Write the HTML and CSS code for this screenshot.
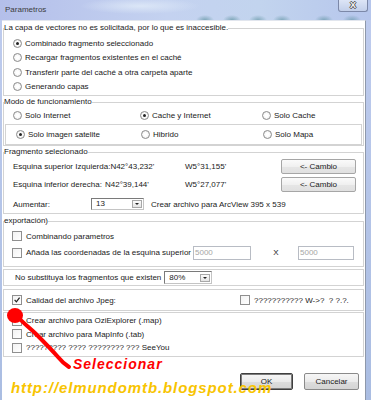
FILE: index.html
```html
<!DOCTYPE html>
<html lang="es">
<head>
  <meta charset="UTF-8" />
  <title>Parametros</title>
  <link rel="stylesheet" href="styles.css">
</head>
<body>
  <div class="window">
    <div class="titlebar">
      <span class="title">Parametros</span>
      <span class="close">X</span>
    </div>

    <div class="client">
      <fieldset class="group g1">
        <legend>La capa de vectores no es solicitada, por lo que es inaccesible.</legend>
        <div class="row"><span class="radio on"></span>Combinado fragmento seleccionado</div>
        <div class="row"><span class="radio"></span>Recargar fragmentos existentes en el caché</div>
        <div class="row"><span class="radio"></span>Transferir parte del caché a otra carpeta aparte</div>
        <div class="row"><span class="radio"></span>Generando capas</div>
      </fieldset>

      <fieldset class="group g2">
        <legend>Modo de funcionamiento</legend>
        <div class="row cols">
          <span class="opt"><span class="radio"></span>Solo Internet</span>
          <span class="opt"><span class="radio on"></span>Cache y Internet</span>
          <span class="opt"><span class="radio"></span>Solo Cache</span>
        </div>
        <div class="subbox cols">
          <span class="opt"><span class="radio on"></span>Solo imagen satelite</span>
          <span class="opt"><span class="radio"></span>Hibrido</span>
          <span class="opt"><span class="radio"></span>Solo Mapa</span>
        </div>
      </fieldset>

      <fieldset class="group g3">
        <legend>Fragmento selecionado</legend>
        <div class="coord">
          <span class="lbl">Esquina superior Izquierda:N42°43,232'</span>
          <span>W5°31,155'</span>
          <button class="btn small">&lt;- Cambio</button>
        </div>
        <div class="coord">
          <span class="lbl">Esquina inferior derecha:<span class="val">N42°39,144'</span></span>
          <span>W5°27,077'</span>
          <button class="btn small">&lt;- Cambio</button>
        </div>
        <div class="zoomrow">
          <span class="zlbl">Aumentar:</span>
          <span class="combo zcombo">13<span class="drop"></span></span>
          <span class="ztext">Crear archivo para ArcView 395 x 539</span>
        </div>
      </fieldset>

      <fieldset class="group g4">
        <legend>exportación)</legend>
        <div class="row r1"><span class="check"></span>Combinando parametros</div>
        <div class="row r2">
          <span class="check"></span>
          <span class="clip">Añada las coordenadas de la esquina superior i</span>
          <span class="field">5000</span>
          <span class="times">X</span>
          <span class="field f2">5000</span>
        </div>
      </fieldset>

      <div class="box b5">
        <span>No substituya los fragmentos que existen</span>
        <span class="combo pcombo">80%<span class="drop"></span></span>
      </div>

      <div class="box b6">
        <span class="opt wide"><span class="check on"><svg viewBox="0 0 9 9"><path d="M1.8 4.4 L3.8 6.6 L7.4 1.8"/></svg></span>Calidad del archivo Jpeg:</span>
        <span class="opt"><span class="check"></span>??????????? W-&gt;?&nbsp; ? ?.?.</span>
      </div>

      <div class="box b7">
        <div class="row"><span class="check"></span>Crear archivo para OziExplorer (.map)</div>
        <div class="row"><span class="check"></span>Crear archivo para MapInfo (.tab)</div>
        <div class="row"><span class="check"></span>????????? ???? ???????? ??? SeeYou</div>
      </div>

      <div class="footer">
        <button class="btn def">OK</button>
        <button class="btn cancel">Cancelar</button>
      </div>
    </div>

    <svg class="marks" width="371" height="400" viewBox="0 0 371 400">
      <ellipse cx="15" cy="315.5" rx="8" ry="7.5" fill="#ff0000"/>
      <path d="M17 316 C 24 324, 30 328, 36 334 C 44 342, 50 348, 58 357 C 62 362, 66 365, 69 367" fill="none" stroke="#ff0000" stroke-width="4" stroke-linecap="round"/>
      <text x="73" y="368.5" class="sel">Seleccionar</text>
      <text x="11" y="392.5" class="url">http://elmundomtb.blogspot.com</text>
    </svg>
  </div>
</body>
</html>
```

FILE: styles.css
```css
* {
  box-sizing: border-box;
}
body {
  margin: 0;
  font-family: "Liberation Sans", Arial, sans-serif;
  font-size: 8px;
  color: #1a1a1a;
}
.window {
  position: relative;
  width: 371px;
  height: 400px;
  overflow: hidden;
  background: linear-gradient(180deg, #bfccee, #aabde2);
}
.titlebar {
  height: 20px;
  display: flex;
  justify-content: space-between;
  align-items: flex-start;
  padding-left: 5px;
  background:
    radial-gradient(ellipse 9px 5px at 205px 20px, rgba(70,130,140,0.55), transparent),
    radial-gradient(ellipse 9px 5px at 232px 20px, rgba(70,130,140,0.55), transparent),
    radial-gradient(ellipse 9px 5px at 258px 20px, rgba(70,130,140,0.5), transparent),
    radial-gradient(ellipse 9px 5px at 282px 20px, rgba(70,130,140,0.5), transparent),
    radial-gradient(ellipse 9px 5px at 324px 20px, rgba(70,130,140,0.5), transparent),
    radial-gradient(ellipse 9px 5px at 352px 20px, rgba(70,130,140,0.45), transparent),
    radial-gradient(ellipse 60px 8px at 140px 6px, rgba(230,240,250,0.7), transparent),
    linear-gradient(90deg, #b4bfea, #c4d2f0 45%, #c2d4ee 70%, #b6c6ec);
}
.title {
  line-height: 20px;
  color: #3c3c3c;
}
.close {
  width: 30px;
  height: 12px;
  margin-right: 3px;
  border: 1px solid #7c88a8;
  border-top: none;
  border-radius: 0 0 3px 3px;
  background: linear-gradient(#dde5f6, #c2cfea);
  text-align: center;
  font-weight: bold;
  font-size: 9px;
  line-height: 11px;
  color: #f4f4f4;
  text-shadow: 1px 0 #555, -1px 0 #555, 0 1px #555, 0 -1px #555;
}
.client {
  margin: 0 5px 0 2px;
  height: 380px;
  background: #fff;
  border-right: 1px solid #8e98aa;
  border-top: 1px solid #e2e6ee;
}
.group {
  margin: 0 1px;
  padding: 0 7px 0 9px;
  border: 1px solid #d3d3d3;
  min-width: 0;
}
.group legend {
  padding: 0;
  margin-left: -9px;
  line-height: 8px;
}
.row {
  display: flex;
  align-items: center;
  white-space: nowrap;
}
.radio {
  width: 9px;
  height: 9px;
  margin-right: 3px;
  flex: none;
  border: 1px solid #8b8b8b;
  border-radius: 50%;
  background: radial-gradient(circle, #ffffff 30%, #e6e6e6);
  display: inline-flex;
  align-items: center;
  justify-content: center;
}
.radio.on::after {
  content: "";
  width: 3px;
  height: 3px;
  border-radius: 50%;
  background: #222;
}
.check {
  width: 10px;
  height: 10px;
  margin-right: 4px;
  flex: none;
  border: 1px solid #8f8f8f;
  background: linear-gradient(135deg, #f2f2f2, #fff);
  display: inline-block;
}
.check svg {
  display: block;
  width: 8px;
  height: 8px;
}
.check svg path {
  fill: none;
  stroke: #222;
  stroke-width: 1.4;
}
.opt {
  display: flex;
  align-items: center;
  white-space: nowrap;
}

.g1 {
  margin-top: 3px;
  padding-top: 4px;
  padding-bottom: 1px;
}
.g1 .row {
  height: 14.5px;
}

.g2 {
  margin-top: 2px;
  padding-top: 2px;
  padding-bottom: 0;
}
.cols {
  display: grid;
  grid-template-columns: 127px 122px 1fr;
  align-items: center;
}
.g2 .row {
  height: 14px;
}
.subbox {
  height: 21px;
  margin: 2px -6px 0 -8px;
  padding-left: 10px;
  border: 1px solid #d3d3d3;
  grid-template-columns: 125px 122px 1fr;
}

.g3 {
  margin-top: 2px;
  padding-top: 3px;
  padding-bottom: 2px;
}
.coord {
  display: grid;
  grid-template-columns: 172px 1fr 75px;
  align-items: center;
  height: 15px;
  margin-bottom: 3px;
  white-space: nowrap;
}
.val {
  margin-left: 3px;
}
.btn {
  font-family: inherit;
  font-size: 8px;
  color: #1a1a1a;
  padding: 0;
  border: 1px solid #8a8a8a;
  border-radius: 2px;
  background: linear-gradient(#f6f6f6, #ebebeb 50%, #dddddd 51%, #d4d4d4);
}
.btn.small {
  height: 15px;
  border-color: #a6a6a6;
  background: linear-gradient(#fafafa, #f0f0f0 50%, #e6e6e6 51%, #e0e0e0);
}
.zoomrow {
  display: flex;
  align-items: center;
  height: 14px;
  margin-top: 5px;
}
.zlbl {
  width: 78px;
}
.combo {
  position: relative;
  height: 12px;
  border: 1px solid #7a7a7a;
  border-right-color: #c4c4c4;
  border-bottom-color: #c4c4c4;
  padding-left: 4px;
  line-height: 10px;
  background: #fff;
  display: flex;
  align-items: center;
}
.zcombo {
  width: 53px;
}
.drop {
  margin-left: auto;
  margin-right: 1px;
  width: 10px;
  height: 8px;
  border: 1px solid #a8a8a8;
  background: linear-gradient(#fbfbfb, #e4e4e4);
  display: flex;
  align-items: center;
  justify-content: center;
}
.drop::after {
  content: "";
  border-left: 2px solid transparent;
  border-right: 2px solid transparent;
  border-top: 2px solid #222;
}
.ztext {
  margin-left: 7px;
  white-space: nowrap;
}

.g4 {
  margin-top: 3px;
  padding-top: 3px;
  padding-bottom: 5px;
  padding-left: 8px;
}
.g4 legend {
  margin-left: -8px;
}
.g4 .r1 {
  height: 16px;
}
.g4 .r2 {
  height: 17px;
}
.clip {
  width: 167px;
  flex: none;
}
.field {
  width: 58px;
  height: 14px;
  border: 1px solid #b8bcc4;
  color: #a6a6a6;
  padding-left: 1px;
  line-height: 12px;
  flex: none;
  background: #fff;
}
.times {
  width: 47px;
  text-align: center;
  padding-left: 3px;
}
.field.f2 {
  width: 56px;
}

.box {
  margin: 2px 1px 0;
  border: 1px solid #d3d3d3;
  display: flex;
  align-items: center;
  white-space: nowrap;
}
.b5 {
  height: 17px;
  padding-left: 11px;
  gap: 3px;
}
.pcombo {
  width: 48px;
  height: 13px;
}
.b6 {
  margin-top: 3px;
  height: 22px;
  padding-left: 8px;
}
.b6 .wide {
  width: 228px;
}
.b7 {
  margin-top: 1px;
  display: block;
  padding: 1px 0 1.5px 8px;
}
.b7 .row {
  height: 13.5px;
}

.footer {
  display: flex;
  justify-content: flex-end;
  gap: 11px;
  margin-top: 16px;
  padding-right: 6px;
}
.footer .btn {
  height: 17px;
}
.btn.def {
  width: 53px;
  border: 1px solid #3f3f3f;
  box-shadow: inset 0 0 0 1px #7c7c7c;
}
.btn.cancel {
  width: 55px;
}

.marks {
  position: absolute;
  left: 0;
  top: 0;
  pointer-events: none;
}
.sel {
  font-family: "Liberation Sans", Arial, sans-serif;
  font-size: 14px;
  font-weight: bold;
  font-style: italic;
  letter-spacing: 1px;
  fill: #ff0000;
}
.url {
  font-family: "Liberation Sans", Arial, sans-serif;
  font-size: 15px;
  font-weight: bold;
  font-style: italic;
  letter-spacing: 0.9px;
  fill: #f8c400;
}
```
